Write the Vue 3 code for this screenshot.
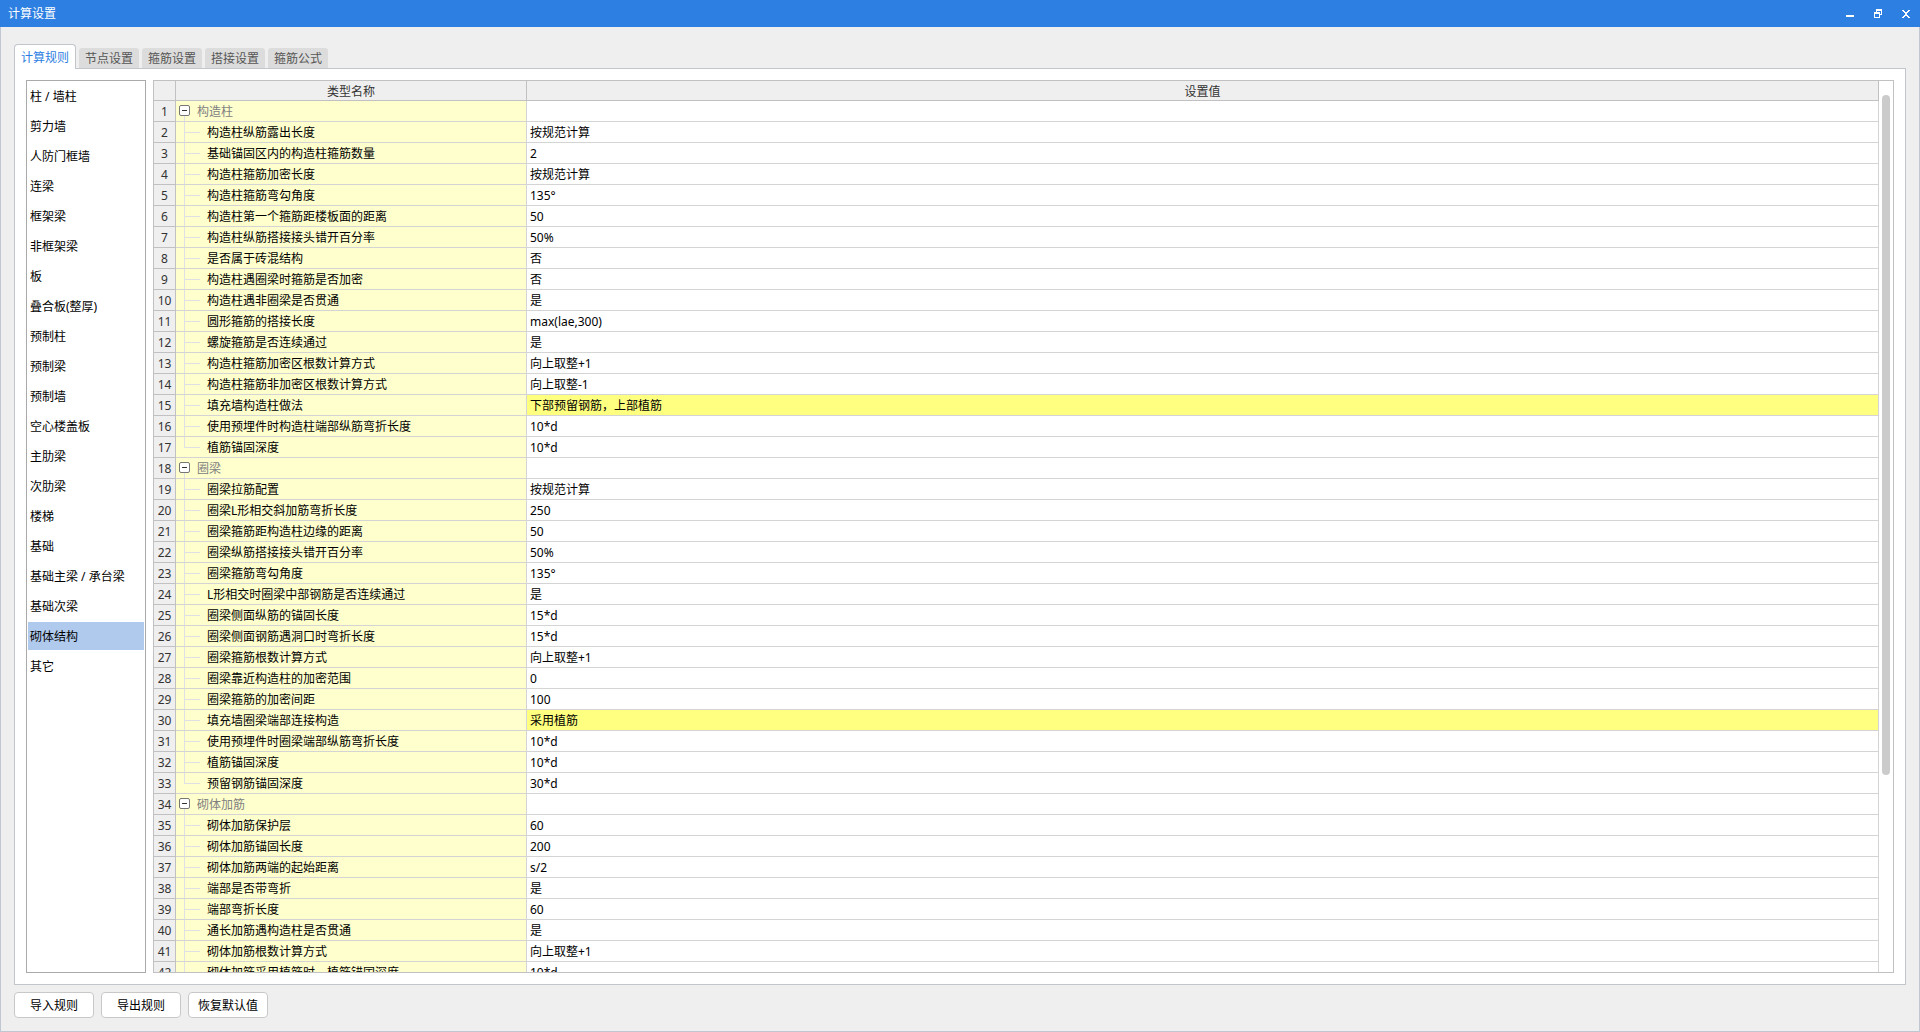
<script setup>
import { ref, computed } from 'vue'

const tabs = ['计算规则', '节点设置', '箍筋设置', '搭接设置', '箍筋公式']
const activeTab = ref(0)

const categories = [
  '柱 / 墙柱', '剪力墙', '人防门框墙', '连梁', '框架梁', '非框架梁', '板', '叠合板(整厚)',
  '预制柱', '预制梁', '预制墙', '空心楼盖板', '主肋梁', '次肋梁', '楼梯', '基础',
  '基础主梁 / 承台梁', '基础次梁', '砌体结构', '其它'
]
const activeCategory = ref('砌体结构')

const groups = ref([
  {
    name: '构造柱',
    open: true,
    items: [
      ['构造柱纵筋露出长度', '按规范计算'],
      ['基础锚固区内的构造柱箍筋数量', '2'],
      ['构造柱箍筋加密长度', '按规范计算'],
      ['构造柱箍筋弯勾角度', '135°'],
      ['构造柱第一个箍筋距楼板面的距离', '50'],
      ['构造柱纵筋搭接接头错开百分率', '50%'],
      ['是否属于砖混结构', '否'],
      ['构造柱遇圈梁时箍筋是否加密', '否'],
      ['构造柱遇非圈梁是否贯通', '是'],
      ['圆形箍筋的搭接长度', 'max(lae,300)'],
      ['螺旋箍筋是否连续通过', '是'],
      ['构造柱箍筋加密区根数计算方式', '向上取整+1'],
      ['构造柱箍筋非加密区根数计算方式', '向上取整-1'],
      ['填充墙构造柱做法', '下部预留钢筋，上部植筋', true],
      ['使用预埋件时构造柱端部纵筋弯折长度', '10*d'],
      ['植筋锚固深度', '10*d']
    ]
  },
  {
    name: '圈梁',
    open: true,
    items: [
      ['圈梁拉筋配置', '按规范计算'],
      ['圈梁L形相交斜加筋弯折长度', '250'],
      ['圈梁箍筋距构造柱边缘的距离', '50'],
      ['圈梁纵筋搭接接头错开百分率', '50%'],
      ['圈梁箍筋弯勾角度', '135°'],
      ['L形相交时圈梁中部钢筋是否连续通过', '是'],
      ['圈梁侧面纵筋的锚固长度', '15*d'],
      ['圈梁侧面钢筋遇洞口时弯折长度', '15*d'],
      ['圈梁箍筋根数计算方式', '向上取整+1'],
      ['圈梁靠近构造柱的加密范围', '0'],
      ['圈梁箍筋的加密间距', '100'],
      ['填充墙圈梁端部连接构造', '采用植筋', true],
      ['使用预埋件时圈梁端部纵筋弯折长度', '10*d'],
      ['植筋锚固深度', '10*d'],
      ['预留钢筋锚固深度', '30*d']
    ]
  },
  {
    name: '砌体加筋',
    open: true,
    more: true,
    items: [
      ['砌体加筋保护层', '60'],
      ['砌体加筋锚固长度', '200'],
      ['砌体加筋两端的起始距离', 's/2'],
      ['端部是否带弯折', '是'],
      ['端部弯折长度', '60'],
      ['通长加筋遇构造柱是否贯通', '是'],
      ['砌体加筋根数计算方式', '向上取整+1'],
      ['砌体加筋采用植筋时，植筋锚固深度', '10*d']
    ]
  }
])

const rows = computed(() => {
  const list = []
  let no = 0
  for (const group of groups.value) {
    no += 1
    list.push({ no, group })
    group.items.forEach(([name, value, changed], i) => {
      no += 1
      if (group.open) {
        list.push({ no, name, value, changed, last: !group.more && i === group.items.length - 1 })
      }
    })
  }
  return list
})
</script>

<template>
  <div class="window">
    <header class="titlebar">
      <h1>计算设置</h1>
      <div class="window-actions">
        <button type="button" aria-label="最小化">
          <svg width="10" height="10" viewBox="0 0 10 10" shape-rendering="crispEdges"><path d="M1 6h8v2H1z" fill="#fff" /></svg>
        </button>
        <button type="button" aria-label="还原">
          <svg width="10" height="10" viewBox="0 0 10 10" shape-rendering="crispEdges">
            <path d="M3 0h6v6H7V5h1V2H4v1H3zM1 3h6v6H1zM2 5v3h4V5z" fill="#fff" fill-rule="evenodd" />
          </svg>
        </button>
        <button type="button" aria-label="关闭">
          <svg width="10" height="10" viewBox="0 0 10 10" shape-rendering="crispEdges">
            <path d="M1 1h2v1h1v1h2V2h1V1h2v1H8v1H7v1H6v2h1v1h1v1h1v1H7V8H6V7H4v1H3v1H1V8h1V7h1V6h1V4H3V3H2V2H1z" fill="#fff" />
          </svg>
        </button>
      </div>
    </header>

    <main class="body">
      <div class="tabs" role="tablist">
        <button
          v-for="(tab, i) in tabs"
          :key="tab"
          type="button"
          role="tab"
          class="tab"
          :class="{ active: i === activeTab }"
          :aria-selected="i === activeTab"
          @click="activeTab = i"
        >{{ tab }}</button>
      </div>

      <section class="panel">
        <nav class="categories">
          <button
            v-for="category in categories"
            :key="category"
            type="button"
            :class="{ selected: category === activeCategory }"
            @click="activeCategory = category"
          >{{ category }}</button>
        </nav>

        <div class="grid">
          <div class="grid-view">
            <table>
              <colgroup>
                <col class="col-no" />
                <col class="col-name" />
                <col />
              </colgroup>
              <thead>
                <tr>
                  <th></th>
                  <th scope="col">类型名称</th>
                  <th scope="col">设置值</th>
                </tr>
              </thead>
              <tbody>
                <tr v-for="row in rows" :key="row.no">
                  <th scope="row">{{ row.no }}</th>
                  <td class="name">
                    <div v-if="row.group" class="node group">
                      <span class="handle">
                        <button
                          type="button"
                          class="toggle"
                          :aria-label="row.group.name"
                          :aria-expanded="row.group.open"
                          @click="row.group.open = !row.group.open"
                        >
                          <svg width="9" height="9" viewBox="0 0 9 9" shape-rendering="crispEdges">
                            <path :d="row.group.open ? 'M2 4h5v1H2z' : 'M2 4h2V2h1v2h2v1H5v2H4V5H2z'" fill="#333" />
                          </svg>
                        </button>
                      </span>
                      <span>{{ row.group.name }}</span>
                    </div>
                    <div v-else class="node">
                      <span class="branch" :class="{ last: row.last }"></span>
                      <span>{{ row.name }}</span>
                    </div>
                  </td>
                  <td class="value" :class="{ changed: row.changed }">{{ row.value }}</td>
                </tr>
              </tbody>
            </table>
          </div>
          <div class="scrollbar"><div class="thumb"></div></div>
        </div>
      </section>

      <footer class="actions">
        <button type="button">导入规则</button>
        <button type="button">导出规则</button>
        <button type="button">恢复默认值</button>
      </footer>
    </main>
  </div>
</template>

<style>
body {
  margin: 0;
}
</style>

<style scoped>
.window,
.window * {
  box-sizing: border-box;
}

.window {
  display: flex;
  flex-direction: column;
  height: 100vh;
  background: #efefef;
  color: #000;
  font: 12px/18px "Noto Sans", "Noto Sans CJK SC", sans-serif;
}

button {
  margin: 0;
  padding: 0;
  border: 0;
  background: none;
  color: inherit;
  font: inherit;
}

.titlebar {
  display: flex;
  flex: none;
  align-items: center;
  justify-content: space-between;
  height: 27px;
  padding: 0 9px 0 8px;
  background: #2d80e2;
  color: #fff;
}

.titlebar h1 {
  margin: 0;
  font-size: 12px;
  font-weight: 400;
}

.window-actions {
  display: flex;
  gap: 18px;
}

.window-actions button {
  width: 10px;
  height: 10px;
}

.window-actions svg {
  display: block;
}

.body {
  display: flex;
  flex: 1;
  flex-direction: column;
  min-height: 0;
  padding: 17px 13px 13px;
  border: 1px solid #c1c7d2;
  border-top: 0;
}

.tabs {
  display: flex;
  flex: none;
  align-items: flex-end;
  gap: 3px;
  height: 24px;
}

.tab {
  width: 60px;
  height: 20px;
  padding-top: 2px;
  border-radius: 3px 3px 0 0;
  background: #dcdcdc;
  color: #555;
}

.tab.active {
  position: relative;
  z-index: 1;
  width: 62px;
  height: 25px;
  margin-bottom: -1px;
  border: 1px solid #c1c5cc;
  border-bottom: 0;
  border-radius: 4px 4px 0 0;
  background: #fff;
  color: #2d80e2;
}

.panel {
  display: flex;
  flex: 1;
  gap: 7px;
  min-height: 0;
  padding: 11px;
  border: 1px solid #c1c5cc;
  background: #fff;
}

.categories {
  display: flex;
  flex: none;
  flex-direction: column;
  gap: 2px;
  width: 120px;
  padding: 1px;
  border: 1px solid #aaa;
}

.categories button {
  flex: none;
  height: 28px;
  padding: 2px 2px 0;
  text-align: left;
  white-space: nowrap;
}

.categories button.selected {
  background: #b0caed;
}

.grid {
  display: flex;
  flex: 1;
  min-width: 0;
  border: 1px solid #c1c1c4;
}

.grid-view {
  flex: 1;
  min-width: 0;
  overflow: hidden;
}

table {
  width: 100%;
  border-spacing: 0;
  table-layout: fixed;
}

.col-no {
  width: 22px;
}

.col-name {
  width: 351px;
}

th,
td {
  height: 21px;
  padding: 2px 0 0;
  border: solid #d4d4d4;
  border-width: 0 1px 1px 0;
  text-align: left;
  white-space: nowrap;
}

th {
  border-color: #c1c1c4;
  background: #efefef;
  color: #333;
  font-weight: 400;
  text-align: center;
}

thead th {
  height: 20px;
  line-height: 17px;
}

.name {
  padding: 0;
  background: #ffffcd;
}

.value {
  padding-left: 3px;
}

.value.changed {
  background: #ffff80;
}

.node {
  display: flex;
  gap: 7px;
  height: 20px;
  padding-left: 8px;
  line-height: 22px;
}

.node.group {
  padding-left: 3px;
  color: #808080;
}

.handle {
  display: flex;
  flex-direction: column;
  align-items: center;
  width: 11px;
  padding-top: 4px;
}

.handle::after {
  flex: 1;
  width: 1px;
  background: #dfdfe6;
  content: "";
}

.toggle {
  width: 11px;
  height: 11px;
  border: 1px solid #777;
  border-radius: 2px;
  background: #fff;
}

.toggle svg {
  display: block;
}

.branch {
  display: flex;
  flex-direction: column;
  width: 16px;
}

.branch::before {
  height: 10px;
  border: solid #dfdfe6;
  border-width: 0 0 1px 1px;
  content: "";
}

.branch::after {
  flex: 1;
  border-left: 1px solid #dfdfe6;
  content: "";
}

.branch.last::after {
  border-left: 0;
}

.scrollbar {
  flex: none;
  width: 14px;
  padding: 14px 3px 0;
}

.thumb {
  width: 8px;
  height: calc(78% - 4px);
  border-radius: 4px;
  background: #cbcbcb;
}

.actions {
  display: flex;
  flex: none;
  gap: 7px;
  margin-top: 7px;
}

.actions button {
  width: 80px;
  height: 26px;
  padding-top: 2px;
  border: 1px solid #c8c8c8;
  border-radius: 4px;
  background: #fff;
}
</style>
